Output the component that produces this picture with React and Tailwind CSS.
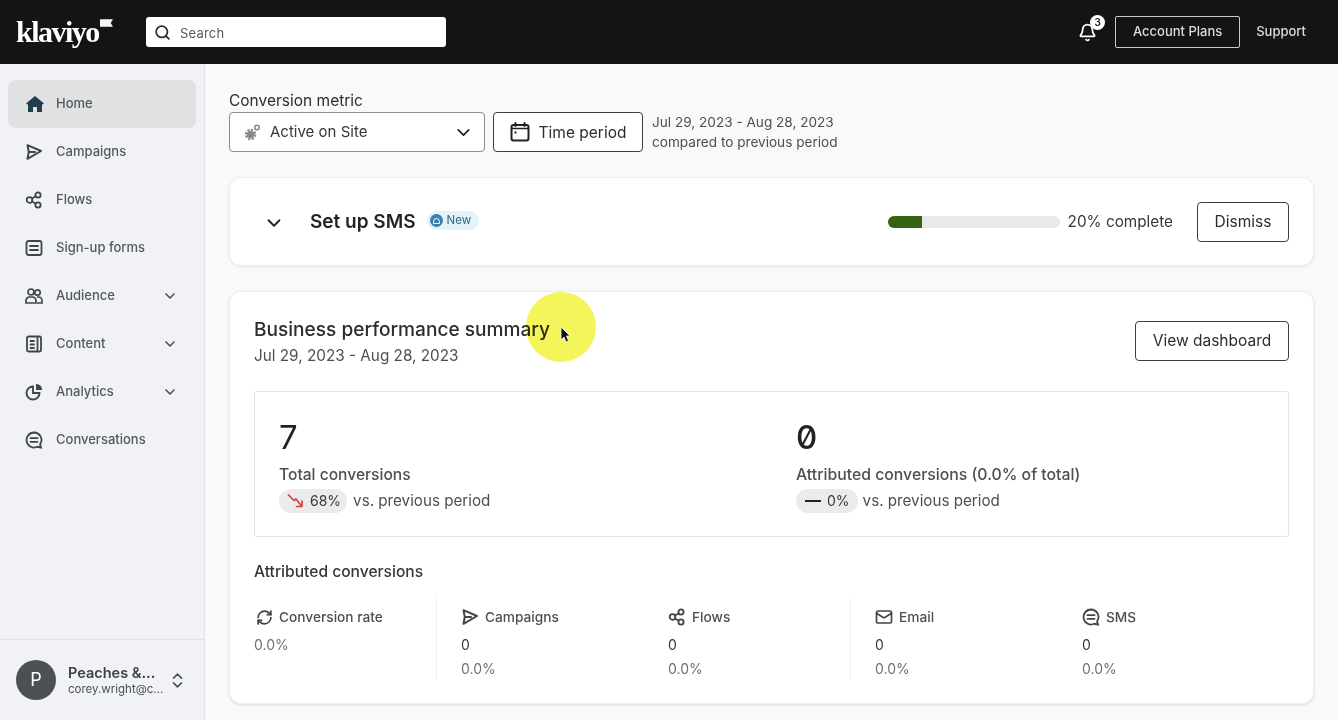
import { Search, Bell, ChevronDown, ChevronsUpDown, RefreshCw, Mail } from 'lucide-react';

const HomeIcon = () => (
  <svg width="20" height="20" viewBox="0 0 20 20" fill="#1f3d4d">
    <path d="M10 2 1 9.500 3 10.800V18h5v-5h4v5h5v-7.200l2-1.300Z" />
  </svg>
);

const CampaignIcon = ({ size = 18 }) => (
  <svg width={size} height={size} viewBox="0 0 18 18" fill="none" stroke="#3f4548" strokeWidth="2" strokeLinejoin="round" strokeLinecap="round">
    <path d="M2.500 2.200 16 8 2.500 15.800 3.800 9Z" />
    <path d="M3.800 9h6.200" />
  </svg>
);

const FlowIcon = ({ size = 18 }) => (
  <svg width={size} height={size} viewBox="0 0 18 18" fill="none" stroke="#3f4548" strokeWidth="1.800">
    <circle cx="4.500" cy="9" r="2.800" />
    <circle cx="13" cy="4" r="2.600" />
    <circle cx="13" cy="14" r="2.600" />
    <path d="M7 7.500 10.800 5.300M7 10.500l3.800 2.200" />
  </svg>
);

const FormIcon = () => (
  <svg width="18" height="18" viewBox="0 0 18 18" fill="none" stroke="#3f4548" strokeWidth="1.800" strokeLinecap="round">
    <rect x="1.500" y="2" width="15" height="14" rx="2" />
    <path d="M5 7h8M5 11h8" />
  </svg>
);

const AudienceIcon = () => (
  <svg width="18" height="18" viewBox="0 0 18 18" fill="none" stroke="#3f4548" strokeWidth="1.700">
    <circle cx="6" cy="5" r="3" />
    <circle cx="12.500" cy="5.500" r="2.700" />
    <path d="M1 16v-2.500A3.500 3.500 0 0 1 4.500 10h3A3.500 3.500 0 0 1 11 13.500V16ZM12 10h1.500a3.500 3.500 0 0 1 3.500 3.500V16h-5" />
  </svg>
);

const ContentIcon = () => (
  <svg width="18" height="18" viewBox="0 0 18 18" fill="none" stroke="#3f4548" strokeWidth="1.800" strokeLinecap="round">
    <rect x="2" y="1.500" width="14" height="15" rx="1.500" />
    <path d="M5.500 6h3.500M5.500 9.500h3.500M5.500 13h3.500M12.500 2v14" />
  </svg>
);

const AnalyticsIcon = () => (
  <svg width="18" height="18" viewBox="0 0 18 18" fill="none" stroke="#3f4548" strokeWidth="1.900">
    <path d="M8 3.500a6.500 6.500 0 1 0 6.500 6.500H8Z" />
    <path d="M11 1h.500A5.500 5.500 0 0 1 17 6.500V7h-6Z" fill="#3f4548" stroke="none" />
  </svg>
);

const ChatIcon = ({ size = 18 }) => (
  <svg width={size} height={size} viewBox="0 0 18 18" fill="none" stroke="#3f4548" strokeWidth="1.800" strokeLinecap="round">
    <path d="M9 1.500a7.500 7.500 0 1 0 3.200 14.300L16 16.500l-.9-3.200A7.500 7.500 0 0 0 9 1.500Z" />
    <path d="M5.500 7.200h7M5.500 10.800h7" />
  </svg>
);

const GearsIcon = () => (
  <svg width="17" height="17" viewBox="0 0 17 17" fill="none">
    <circle cx="6.500" cy="10.500" r="4.500" stroke="#85898c" strokeWidth="2.400" strokeDasharray="2.200 1.300" />
    <circle cx="6.500" cy="10.500" r="3.600" fill="#85898c" />
    <circle cx="13" cy="3.500" r="2.200" stroke="#85898c" strokeWidth="1.600" />
  </svg>
);

const CalendarIcon = () => (
  <svg width="20" height="20" viewBox="0 0 20 20" fill="none" stroke="#1f2326" strokeWidth="2" strokeLinecap="round">
    <rect x="1.500" y="3" width="17" height="15.500" rx="2" />
    <path d="M5.500 1v3M14.500 1v3" />
    <path d="M2 6.500h16" strokeWidth="1.500" />
    <rect x="4.500" y="9.500" width="2" height="2" fill="#1f2326" stroke="none" />
  </svg>
);

const TrendDown = () => (
  <svg width="18" height="16" viewBox="0 0 18 16" fill="none" stroke="#d6404b" strokeWidth="1.700" strokeLinecap="round" strokeLinejoin="round">
    <path d="M1.500 2 7 7.500l2-1.500 5.500 7" />
    <path d="M9.500 13.500h5.500V8" />
  </svg>
);

const navItems = [
  { label: 'Home', icon: <HomeIcon />, active: true },
  { label: 'Campaigns', icon: <CampaignIcon /> },
  { label: 'Flows', icon: <FlowIcon /> },
  { label: 'Sign-up forms', icon: <FormIcon /> },
  { label: 'Audience', icon: <AudienceIcon />, more: true },
  { label: 'Content', icon: <ContentIcon />, more: true },
  { label: 'Analytics', icon: <AnalyticsIcon />, more: true },
  { label: 'Conversations', icon: <ChatIcon /> },
];

const channels = [
  { label: 'Campaigns', icon: <CampaignIcon />, width: 'w-[231px]', pad: 'pl-6' },
  { label: 'Flows', icon: <FlowIcon />, width: 'w-[183px]', pad: 'pl-0', line: true },
  { label: 'Email', icon: <Mail size={18} strokeWidth={2.200} color="#3f4548" />, width: 'w-[231px]', pad: 'pl-6' },
  { label: 'SMS', icon: <ChatIcon />, width: 'w-[200px]', pad: 'pl-0' },
];

const App = () => {
  return (
    <div className="relative flex h-screen w-full flex-col overflow-hidden bg-[#f9f9f9] font-['Inter',sans-serif] text-[#1f2326]">
      <header className="flex h-16 shrink-0 items-center bg-[#141414] pr-8 pl-4">
        <div className="flex w-[130px] items-start">
          <span className="font-['Liberation_Serif',serif] text-[30px] leading-none font-semibold tracking-[-1.500px] text-white">klaviyo</span>
          <svg width="13" height="10" viewBox="0 0 14 10" className="mt-[1px] ml-[1px]" fill="#f5f5f5">
            <path d="M0 1h14l-2.500 4L14 9H0Z" />
          </svg>
        </div>
        <div className="flex h-[30px] w-[300px] items-center gap-[9px] rounded-[3px] bg-white px-2">
          <Search size={17} strokeWidth={2.500} color="#2b2f32" />
          <span className="mt-[3px] text-[13px] tracking-[0.2px] text-[#555a5e]">Search</span>
        </div>
        <div className="ml-auto flex items-center">
          <div className="relative mr-[18px]">
            <Bell size={19} strokeWidth={2.200} color="#fff" />
            <span className="absolute -top-[8px] -right-[8px] flex h-[15px] w-[15px] items-center justify-center rounded-full bg-white text-[10px] font-semibold text-[#141414]">3</span>
          </div>
          <div className="flex h-8 w-[125px] items-center justify-center rounded-[2px] border border-[#c9c9c9] text-[13px] font-medium text-[#dcdcdc]">Account Plans</div>
          <span className="ml-4 text-[13px] font-medium text-[#dcdcdc]">Support</span>
        </div>
      </header>

      <div className="flex min-h-0 flex-1">
        <aside className="flex w-[205px] shrink-0 flex-col border-r border-[#dfe1e4] bg-[#f0f2f5]">
          <nav className="flex flex-1 flex-col px-2 pt-4">
            {navItems.map((item) => (
              <div key={item.label} className={`flex h-12 w-[188px] shrink-0 items-center rounded-lg pr-[18px] pl-[17px] ${item.active ? 'bg-[#dfe1e3]' : ''}`}>
                <span className="flex w-[31px] shrink-0 items-center">{item.icon}</span>
                <span className="text-[13px] font-medium text-[#55595c]">{item.label}</span>
                {item.more && <ChevronDown size={16} strokeWidth={2.500} color="#4b5053" className="ml-auto" />}
              </div>
            ))}
          </nav>
          <div className="flex h-[81px] items-center border-t border-[#dfe1e4] pl-4">
            <div className="flex h-10 w-10 items-center justify-center rounded-full bg-[#4d5052] text-lg text-white">P</div>
            <div className="ml-3 w-[100px]">
              <div className="text-[14.500px] leading-[18px] font-semibold text-[#3d4245]">Peaches &amp;...</div>
              <div className="text-[11.500px] leading-[15px] text-[#4b5053]">corey.wright@c...</div>
            </div>
            <ChevronsUpDown size={19} strokeWidth={2} color="#4b5053" />
          </div>
        </aside>

        <main className="min-w-0 flex-1 pt-[28px] pr-6 pl-6">
          <div className="text-[15.500px] leading-[17px] text-[#2a2e31]">Conversion metric</div>
          <div className="mt-[3px] flex items-center gap-2">
            <div className="flex h-10 w-[256px] items-center rounded border border-[#8a8d90] bg-white pr-[10px] pl-[14px]">
              <GearsIcon />
              <span className="mt-[1px] ml-[9px] text-[15px] text-[#34383b]">Active on Site</span>
              <ChevronDown size={21} strokeWidth={2} color="#1f2326" className="ml-auto" />
            </div>
            <div className="flex h-10 w-[150px] items-center justify-center gap-[9px] rounded border border-[#3b3f42] bg-white">
              <CalendarIcon />
              <span className="mt-[1px] text-[15.500px] text-[#2a2e31]">Time period</span>
            </div>
            <div className="ml-[1px] text-[13.600px] leading-5 text-[#4b5053]">
              <div>Jul 29, 2023 - Aug 28, 2023</div>
              <div>compared to previous period</div>
            </div>
          </div>

          <section className="mt-[25px] flex h-[89px] items-center rounded-xl border border-[#eeeeee] bg-white pr-6 pl-[33px] shadow-[0_1px_3px_rgba(0,0,0,0.08)]">
            <ChevronDown size={22} strokeWidth={2} color="#1f2326" className="mt-[3px]" />
            <h2 className="mt-[1px] ml-[25px] text-[19px] font-semibold text-[#1f2326]">Set up SMS</h2>
            <div className="-mt-[2px] ml-[11px] flex h-[19px] items-center gap-1 rounded-full bg-[#e3f3fa] px-[3px] pr-2">
              <span className="flex h-[13px] w-[13px] items-center justify-center rounded-full bg-[#3f7fa8]">
                <span className="h-[6px] w-[7px] rounded-t-sm border border-white" />
              </span>
              <span className="text-[11.500px] text-[#33688a]">New</span>
            </div>
            <div className="ml-auto h-3 w-[172px] overflow-hidden rounded-full bg-[#e9e9e9]">
              <div className="h-full w-[34px] bg-[#346314]" />
            </div>
            <span className="mt-[1px] ml-2 text-[15.300px] text-[#34383b]">20% complete</span>
            <div className="ml-6 flex h-10 w-[92px] items-center justify-center rounded border border-[#3b3f42] text-[15.500px] text-[#2a2e31]">Dismiss</div>
          </section>

          <section className="mt-[25px] h-[413px] rounded-xl border border-[#eeeeee] bg-white px-6 pt-[29px] shadow-[0_1px_3px_rgba(0,0,0,0.12)]">
            <div className="flex items-start justify-between">
              <div className="-mt-[2px]">
                <h2 className="text-[19.100px] leading-[21px] font-medium text-[#2a2e31]">Business performance summary</h2>
                <div className="mt-[6px] text-[15.300px] leading-5 text-[#4b5053]">Jul 29, 2023 - Aug 28, 2023</div>
              </div>
              <div className="flex h-10 w-[154px] items-center justify-center rounded border border-[#3b3f42] text-[15.500px] text-[#2a2e31]">View dashboard</div>
            </div>

            <div className="mt-[25px] flex h-[146px] rounded-[3px] border border-[#e4e4e4] pt-[25px] pl-6">
              <div className="w-[517px]">
                <div className="text-[33px] leading-10 text-[#1f2326]">7</div>
                <div className="mt-2 text-[15.600px] leading-[20px] font-medium text-[#4b5053]">Total conversions</div>
                <div className="mt-[4px] flex items-center gap-[6px]">
                  <span className="flex h-6 items-center gap-[5px] rounded-full bg-[#ebebeb] pr-[6px] pl-[8px] text-sm text-[#34383b]"><TrendDown />68%</span>
                  <span className="text-[15.200px] text-[#4b5053]">vs. previous period</span>
                </div>
              </div>
              <div>
                <div className="text-[33px] leading-10 font-medium text-[#1f2326] slashed-zero">0</div>
                <div className="mt-2 text-[15.800px] leading-[20px] font-medium text-[#4b5053]">Attributed conversions (0.0% of total)</div>
                <div className="mt-[4px] flex items-center gap-[5px]">
                  <span className="flex h-6 items-center gap-[6px] rounded-full bg-[#ebebeb] pr-2 pl-[9px] text-sm text-[#34383b]">
                    <span className="h-[2px] w-[16px] bg-[#1f2326]" />0%
                  </span>
                  <span className="text-[15.200px] text-[#4b5053]">vs. previous period</span>
                </div>
              </div>
            </div>

            <h3 className="mt-[25px] text-[15.600px] leading-5 font-medium text-[#34383b]">Attributed conversions</h3>

            <div className="mt-4 flex h-[82px]">
              <div className="w-[183px] shrink-0 border-r border-[#eceef1] pt-[9px]">
                <div className="flex h-[20px] items-center gap-[6px] pl-[2px]">
                  <RefreshCw size={17} strokeWidth={2.400} color="#3f4548" />
                  <span className="text-[13.700px] font-medium text-[#4b5053]">Conversion rate</span>
                </div>
                <div className="mt-[8px] text-sm leading-5 text-[#6b7074]">0.0%</div>
              </div>
              {channels.map((ch) => (
                <div key={ch.label} className={`${ch.width} shrink-0 pt-[9px] ${ch.pad} ${ch.line ? 'border-r border-[#eceef1]' : ''}`}>
                  <div className="flex h-[20px] items-center gap-[6px]">
                    {ch.icon}
                    <span className="text-[13.700px] font-medium text-[#4b5053]">{ch.label}</span>
                  </div>
                  <div className="mt-[8px] text-sm leading-5 text-[#34383b]">0</div>
                  <div className="mt-[4px] text-sm leading-5 text-[#6b7074]">0.0%</div>
                </div>
              ))}
            </div>
          </section>
        </main>
      </div>

      {/* cursor highlight from the screen recording */}
      <div className="pointer-events-none absolute top-[292px] left-[526px] h-[70px] w-[70px] rounded-full bg-[#f3f349]/90 mix-blend-multiply" />
      <svg className="pointer-events-none absolute top-[326px] left-[560px]" width="11" height="18" viewBox="0 0 11 18" fill="#111" stroke="#fff" strokeWidth="0.800">
        <path d="M1 1v13l3-3 2 5 2.500-1-2-5H10Z" />
      </svg>
    </div>
  );
};

export default App;
